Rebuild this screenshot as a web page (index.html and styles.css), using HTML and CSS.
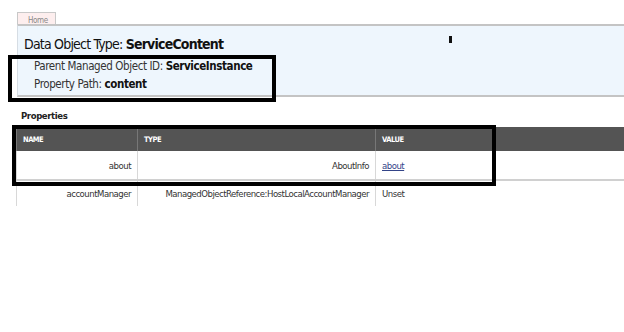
FILE: index.html
```html
<!DOCTYPE html>
<html lang="en">
<head>
    <meta charset="UTF-8">
    <title>Data Object Type: ServiceContent</title>
    <link rel="stylesheet" href="styles.css">
</head>
<body>
    <div class="tabs">
        <span class="tab">Home</span>
    </div>
    <div class="header">
        <h1>Data Object Type: <b>ServiceContent</b></h1>
        <div class="meta">Parent Managed Object ID: <b>ServiceInstance</b></div>
        <div class="meta">Property Path: <b>content</b></div>
        <span class="cursor"></span>
    </div>
    <h2>Properties</h2>
    <table class="props">
        <tr>
            <th class="c-name">NAME</th>
            <th class="c-type">TYPE</th>
            <th class="c-value">VALUE</th>
        </tr>
        <tr>
            <td class="c-name">about</td>
            <td class="c-type">AboutInfo</td>
            <td class="c-value"><a href="#">about</a></td>
        </tr>
        <tr class="last">
            <td class="c-name">accountManager</td>
            <td class="c-type">ManagedObjectReference:HostLocalAccountManager</td>
            <td class="c-value">Unset</td>
        </tr>
    </table>
    <!-- annotation boxes drawn over the screenshot -->
    <div class="mark mark-meta"></div>
    <div class="mark mark-row"></div>
</body>
</html>
```
FILE: styles.css
```css
body {
    margin: 0;
    padding: 8px 0 0 0;
    font-family: 'DejaVu Sans Condensed', 'DejaVu Sans', sans-serif;
    color: #222;
    background: #fff;
    position: relative;
}
.tabs {
    padding-left: 17px;
    height: 16px;
}
.tab {
    display: inline-block;
    height: 15px;
    line-height: 16px;
    padding: 0 7px 0 10px;
    font-size: 8px;
    letter-spacing: -0.4px;
    color: #888;
    background: #fdeeee;
    border: 1px solid #c8c8c8;
    border-bottom: none;
}
.header {
    margin-left: 17px;
    height: 69px;
    padding: 0 0 0 6px;
    background: #eef6fd;
    border-top: 2px solid #c4c4c4;
    border-bottom: 2px solid #c4c4c4;
    border-left: 1px solid #d6dde4;
    position: relative;
}
h1 {
    margin: 0;
    padding-top: 8px;
    font-size: 14px;
    letter-spacing: -0.8px;
    font-weight: normal;
    line-height: 20px;
    color: #111;
}
.meta {
    padding-left: 10px;
    font-size: 11.5px;
    letter-spacing: -0.4px;
    line-height: 18px;
    color: #333;
}
.meta:first-of-type {
    margin-top: 3px;
}
.meta b {
    color: #111;
}
.cursor {
    position: absolute;
    left: 431px;
    top: 10px;
    width: 3px;
    height: 7px;
    background: #111;
}
h2 {
    margin: 12px 0 0 21px;
    font-size: 9.5px;
    letter-spacing: -0.4px;
    line-height: 14px;
    color: #222;
}
.props {
    margin: 4px 0 0 16px;
    width: calc(100% - 16px);
    border-collapse: collapse;
    font-size: 9.5px;
    letter-spacing: -0.5px;
}
.props th {
    background: #545454;
    color: #fff;
    font-size: 7.5px;
    text-align: left;
    height: 24px;
    padding: 0 6px;
    border-left: 1px solid #777;
}
.props td {
    height: 28px;
    padding: 0 6px;
    color: #333;
    border-left: 1px solid #d8d8d8;
    border-bottom: 2px solid #d0d0d0;
}
.props tr.last td {
    height: 18px;
    vertical-align: top;
    padding-top: 7px;
    border-bottom: none;
}
.props .c-name {
    width: 108px;
    text-align: right;
}
.props th.c-name,
.props th.c-type {
    text-align: left;
}
.props .c-type {
    width: 225px;
    text-align: right;
}
.props .c-value {
    text-align: left;
}
.props a {
    color: #334488;
}
.mark {
    position: absolute;
    border: 4px solid #000;
}
.mark-meta {
    left: 8px;
    top: 55px;
    width: 260px;
    height: 39px;
}
.mark-row {
    left: 12px;
    top: 125px;
    width: 476px;
    height: 53px;
}
```
